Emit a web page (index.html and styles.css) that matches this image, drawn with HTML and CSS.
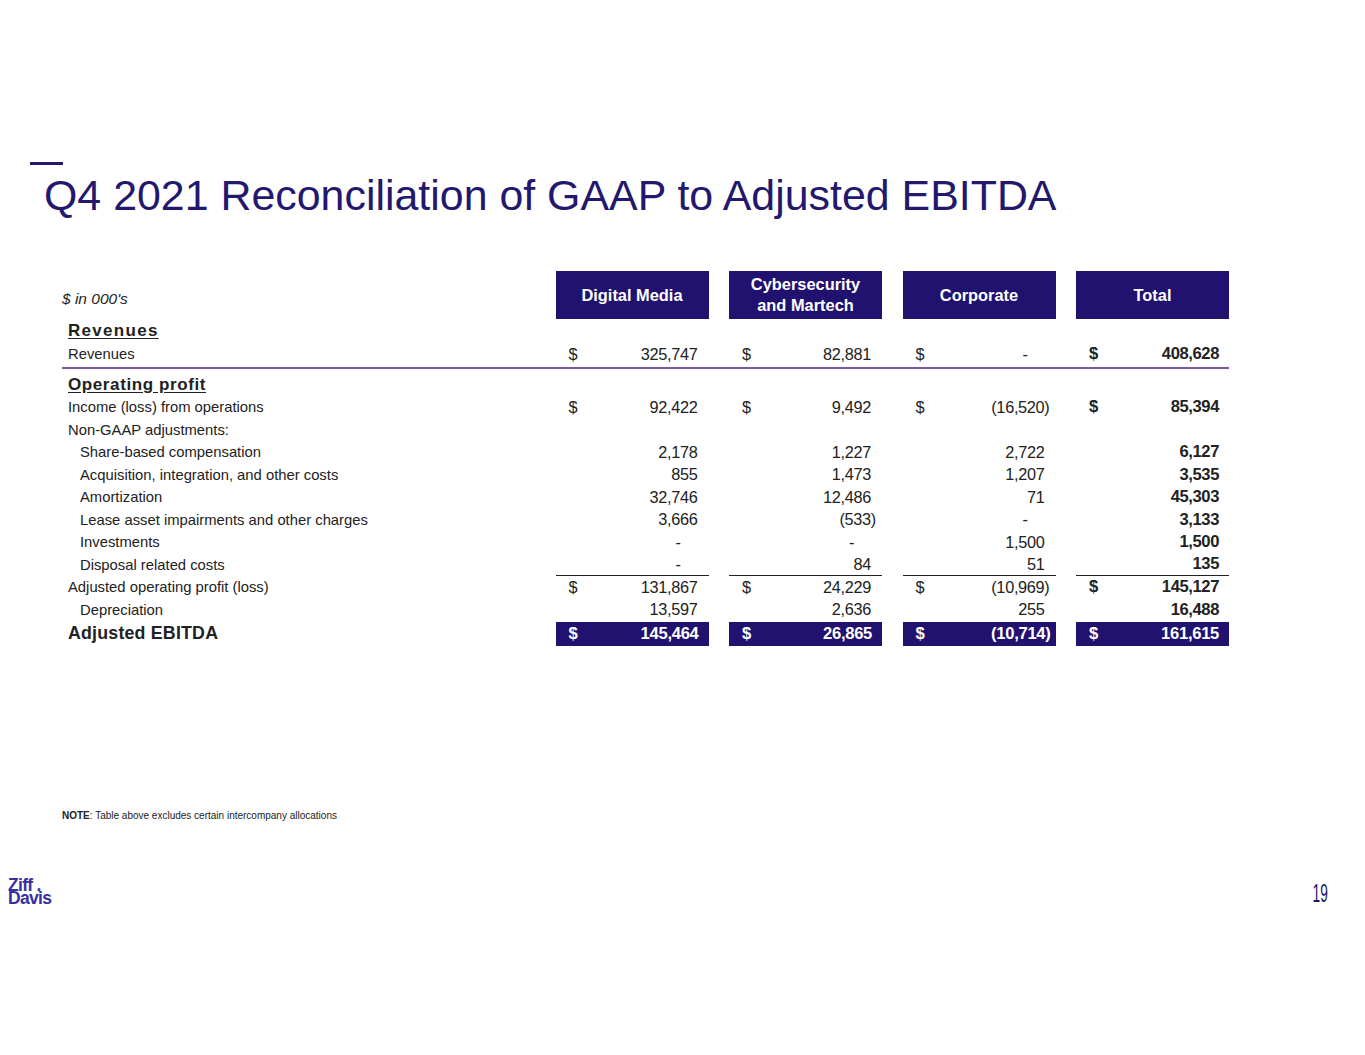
FILE: index.html
```html
<!DOCTYPE html>
<html lang="en">
<head>
<meta charset="utf-8">
<title>Q4 2021 Reconciliation of GAAP to Adjusted EBITDA</title>
<link rel="stylesheet" href="styles.css">
</head>
<body>
<div class="slide">
  <div class="title-bar"></div>
  <h1 class="title">Q4 2021 Reconciliation of GAAP to Adjusted EBITDA</h1>

  <div class="table">
    <div class="row head-row">
      <div class="label units">$ in 000's</div>
      <div class="colhead">Digital Media</div>
      <div class="colhead">Cybersecurity<br>and Martech</div>
      <div class="colhead">Corporate</div>
      <div class="colhead">Total</div>
    </div>

    <div class="row section-row">
      <div class="label section rev">Revenues</div>
    </div>
    <div class="row data rev-row">
      <div class="label">Revenues</div>
      <div class="cell"><span class="cur">$</span><span class="num">325,747</span></div>
      <div class="cell"><span class="cur">$</span><span class="num">82,881</span></div>
      <div class="cell"><span class="cur">$</span><span class="num dash">-</span></div>
      <div class="cell bold"><span class="cur">$</span><span class="num">408,628</span></div>
    </div>

    <div class="row section-row op">
      <div class="label section">Operating profit</div>
    </div>
    <div class="row data">
      <div class="label">Income (loss) from operations</div>
      <div class="cell"><span class="cur">$</span><span class="num">92,422</span></div>
      <div class="cell"><span class="cur">$</span><span class="num">9,492</span></div>
      <div class="cell"><span class="cur">$</span><span class="num neg">(16,520)</span></div>
      <div class="cell bold"><span class="cur">$</span><span class="num">85,394</span></div>
    </div>
    <div class="row data">
      <div class="label">Non-GAAP adjustments:</div>
    </div>
    <div class="row data">
      <div class="label sub">Share-based compensation</div>
      <div class="cell"><span class="num">2,178</span></div>
      <div class="cell"><span class="num">1,227</span></div>
      <div class="cell"><span class="num">2,722</span></div>
      <div class="cell bold"><span class="num">6,127</span></div>
    </div>
    <div class="row data">
      <div class="label sub">Acquisition, integration, and other costs</div>
      <div class="cell"><span class="num">855</span></div>
      <div class="cell"><span class="num">1,473</span></div>
      <div class="cell"><span class="num">1,207</span></div>
      <div class="cell bold"><span class="num">3,535</span></div>
    </div>
    <div class="row data">
      <div class="label sub">Amortization</div>
      <div class="cell"><span class="num">32,746</span></div>
      <div class="cell"><span class="num">12,486</span></div>
      <div class="cell"><span class="num">71</span></div>
      <div class="cell bold"><span class="num">45,303</span></div>
    </div>
    <div class="row data">
      <div class="label sub">Lease asset impairments and other charges</div>
      <div class="cell"><span class="num">3,666</span></div>
      <div class="cell"><span class="num neg">(533)</span></div>
      <div class="cell"><span class="num dash">-</span></div>
      <div class="cell bold"><span class="num">3,133</span></div>
    </div>
    <div class="row data">
      <div class="label sub">Investments</div>
      <div class="cell"><span class="num dash">-</span></div>
      <div class="cell"><span class="num dash">-</span></div>
      <div class="cell"><span class="num">1,500</span></div>
      <div class="cell bold"><span class="num">1,500</span></div>
    </div>
    <div class="row data ruled">
      <div class="label sub">Disposal related costs</div>
      <div class="cell"><span class="num dash">-</span></div>
      <div class="cell"><span class="num">84</span></div>
      <div class="cell"><span class="num">51</span></div>
      <div class="cell bold"><span class="num">135</span></div>
    </div>
    <div class="row data">
      <div class="label">Adjusted operating profit (loss)</div>
      <div class="cell"><span class="cur">$</span><span class="num">131,867</span></div>
      <div class="cell"><span class="cur">$</span><span class="num">24,229</span></div>
      <div class="cell"><span class="cur">$</span><span class="num neg">(10,969)</span></div>
      <div class="cell bold"><span class="cur">$</span><span class="num">145,127</span></div>
    </div>
    <div class="row data">
      <div class="label sub">Depreciation</div>
      <div class="cell"><span class="num">13,597</span></div>
      <div class="cell"><span class="num">2,636</span></div>
      <div class="cell"><span class="num">255</span></div>
      <div class="cell bold"><span class="num">16,488</span></div>
    </div>
    <div class="row total-row">
      <div class="label section-plain">Adjusted EBITDA</div>
      <div class="cell hl"><span class="cur">$</span><span class="num">145,464</span></div>
      <div class="cell hl"><span class="cur">$</span><span class="num">26,865</span></div>
      <div class="cell hl"><span class="cur">$</span><span class="num neg">(10,714)</span></div>
      <div class="cell hl"><span class="cur">$</span><span class="num">161,615</span></div>
    </div>
  </div>

  <p class="note"><b>NOTE</b>: Table above excludes certain intercompany allocations</p>

  <div class="footer">
    <div class="logo"><span class="logo-l1">Ziff<span class="logo-dot">.</span></span><span class="logo-l2">Davis</span></div>
    <div class="page-num">19</div>
  </div>
</div>
</body>
</html>
```

FILE: styles.css
```css
* { box-sizing: border-box; }

html, body {
  margin: 0;
  padding: 0;
  background: #ffffff;
}

body {
  font-family: "Liberation Sans", Arial, sans-serif;
  color: #222222;
}

.slide {
  width: 1365px;
  height: 1055px;
  overflow: hidden;
  padding-top: 162px;
}

.title-bar {
  width: 33px;
  height: 2.5px;
  margin-left: 30px;
  background: #23176e;
}

.title {
  margin: 5.5px 0 0 44px;
  font-size: 42.9px;
  line-height: 50px;
  font-weight: normal;
  color: #23176e;
}

.table {
  margin: 51px 0 0 62px;
  width: 1167px;
}

.row {
  display: grid;
  grid-template-columns: 473px repeat(4, 153px);
  column-gap: 20.5px;
  align-items: center;
}

.label {
  font-size: 14.8px;
  color: #222222;
  white-space: nowrap;
  padding-left: 6px;
}

.label.sub { padding-left: 18px; }

.units {
  font-style: italic;
  font-size: 15.5px;
  padding-left: 0;
  align-self: end;
  padding-bottom: 11px;
}

.head-row { height: 48px; }

.colhead {
  height: 48px;
  background: #20126e;
  color: #ffffff;
  font-weight: bold;
  font-size: 16.4px;
  line-height: 21px;
  text-align: center;
  display: flex;
  align-items: center;
  justify-content: center;
}

.section-row { height: 23px; }
.section-row.op { height: 27px; padding-top: 4px; }

.section {
  font-weight: bold;
  font-size: 17px;
  text-decoration: underline;
  text-underline-offset: 2px;
  letter-spacing: 0.6px;
  line-height: 23px;
}
.section.rev { letter-spacing: 1.3px; }

.data { height: 22.5px; }

.rev-row {
  height: 27px;
  border-bottom: 2px solid #7e57a8;
  padding-bottom: 1px;
}

.cell {
  display: flex;
  justify-content: space-between;
  align-items: center;
  height: 100%;
  padding: 0 11px 0 13px;
  font-size: 16.3px;
  color: #222222;
  letter-spacing: -0.3px;
}

.cell .num { margin-left: auto; }
.cell .neg { margin-right: -5px; }
.cell .dash { margin-right: 17px; }

.cell.bold {
  font-weight: bold;
  font-size: 16.6px;
  padding-right: 10px;
  letter-spacing: -0.4px;
}

.ruled .cell {
  border-bottom: 1.5px solid #222222;
}

.total-row {
  height: 24px;
  margin-top: 0.5px;
}

.section-plain {
  font-weight: bold;
  font-size: 17.8px;
  letter-spacing: 0.2px;
}

.cell.hl {
  background: #20126e;
  color: #ffffff;
  font-weight: bold;
  font-size: 16.6px;
  letter-spacing: -0.3px;
  padding-right: 10px;
}

.note {
  margin: 164px 0 0 62px;
  font-size: 10px;
  line-height: 12px;
  color: #222222;
}

.footer {
  margin-top: 57px;
  display: flex;
  justify-content: space-between;
  align-items: flex-start;
  padding: 0 37px 0 8px;
}

.logo {
  display: flex;
  flex-direction: column;
  color: #3a2f9e;
  font-weight: bold;
  font-size: 17.5px;
  line-height: 13px;
  letter-spacing: -0.7px;
}

.logo-l1, .logo-l2 {
  display: block;
  height: 13px;
}

.logo-dot { margin-left: 4px; }

.page-num {
  margin-top: 2px;
  font-size: 25px;
  line-height: 25px;
  color: #23176e;
  transform: scaleX(0.55);
  transform-origin: right top;
}
```
